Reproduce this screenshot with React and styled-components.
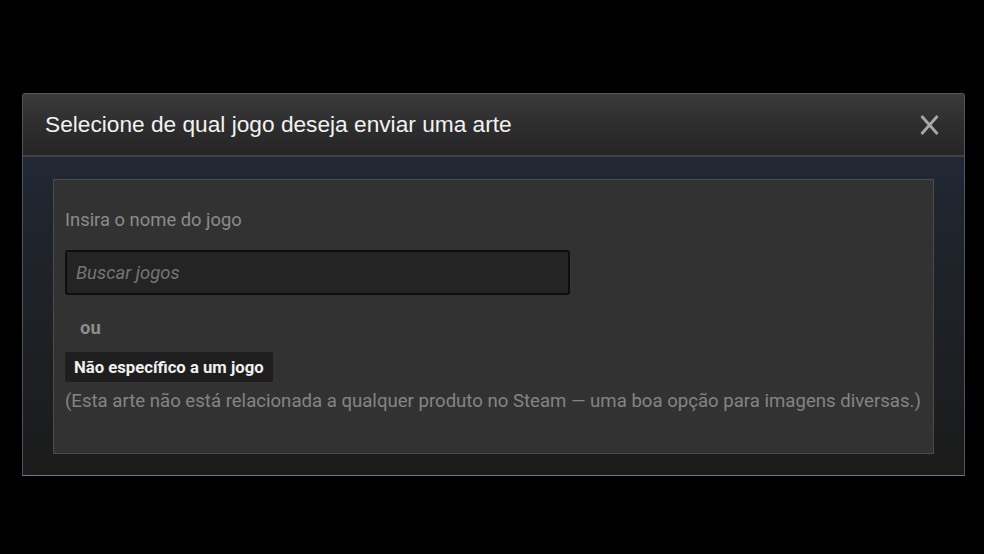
import styled, { createGlobalStyle } from "styled-components";

const GlobalStyle = createGlobalStyle`
  html, body {
    margin: 0;
    padding: 0;
    background: #000;
  }
  body {
    width: 984px;
    height: 554px;
    overflow: hidden;
  }
`;

const Screen = styled.div`
  width: 984px;
  height: 554px;
  padding: 93px 19px 0 22px;
  box-sizing: border-box;
  background: #000;
`;

const Modal = styled.div`
  width: 943px;
  box-sizing: border-box;
  border: 1px solid #4d5560;
  border-top-color: #55575a;
  border-bottom-color: #667a8c;
  border-radius: 3px 3px 0 0;
  box-shadow: 0 0 12px rgba(0, 0, 0, 0.8);
`;

const Header = styled.div`
  height: 61px;
  display: flex;
  align-items: center;
  justify-content: space-between;
  padding: 0 25px 0 22px;
  background: linear-gradient(to bottom, #3a3a3a 0%, #2e2e2e 50%, #252525 100%);
  border-bottom: 2px solid #3f4144;
`;

const Title = styled.h1`
  margin: 0;
  font-family: "Liberation Sans", Arial, sans-serif;
  font-weight: 400;
  font-size: 22.7px;
  color: #f2f2f2;
`;

const Close = styled.button`
  background: none;
  border: none;
  padding: 0;
  width: 19px;
  height: 20px;
  display: flex;
  cursor: pointer;
`;

const Body = styled.div`
  padding: 22px 30px 21px 30px;
  background: linear-gradient(to bottom, #212835 0%, #1f232a 30%, #1b1b1b 100%);
`;

const Panel = styled.div`
  height: 275px;
  box-sizing: border-box;
  border: 1px solid #4b4b4b;
  background: #323232;
  padding: 27px 11px 0 11px;
  font-family: Roboto, "Liberation Sans", sans-serif;
  font-size: 18.4px;
  color: #8b8b8b;
`;

const Label = styled.div`
  line-height: 26px;
  margin-bottom: 17px;
`;

const SearchInput = styled.input`
  display: block;
  width: 505px;
  height: 45px;
  box-sizing: border-box;
  border: 2px solid #0e0e0e;
  border-radius: 3px;
  background: #242424;
  padding: 0 9px;
  font-family: Roboto, "Liberation Sans", sans-serif;
  font-size: 18.4px;
  font-style: italic;
  color: #ccc;
  outline: none;

  &::placeholder {
    color: #757575;
  }
`;

const Or = styled.div`
  margin: 20px 0 0 15px;
  line-height: 26px;
  font-weight: 700;
  color: #8d8d8d;
`;

const PlainButton = styled.button`
  margin-top: 11px;
  height: 30px;
  padding: 0 9px;
  border: none;
  border-radius: 2px;
  background: #1e1e1e;
  font-family: Roboto, "Liberation Sans", sans-serif;
  font-size: 16.7px;
  font-weight: 700;
  color: #f0f0f0;
  cursor: pointer;
`;

const Note = styled.div`
  margin-top: 6px;
  line-height: 26px;
  font-size: 18.6px;
  color: #848484;
`;

export default function App() {
  return (
    <>
      <GlobalStyle />
      <Screen>
        <Modal>
          <Header>
            <Title>Selecione de qual jogo deseja enviar uma arte</Title>
            <Close aria-label="Fechar">
              <svg width="19" height="20" viewBox="0 0 19 20">
                <path
                  d="M1.5 1 L17.5 19 M17.5 1 L1.5 19"
                  stroke="#a9a9a9"
                  strokeWidth="2.8"
                  fill="none"
                />
              </svg>
            </Close>
          </Header>
          <Body>
            <Panel>
              <Label>Insira o nome do jogo</Label>
              <SearchInput placeholder="Buscar jogos" />
              <Or>ou</Or>
              <PlainButton>Não específico a um jogo</PlainButton>
              <Note>
                (Esta arte não está relacionada a qualquer produto no Steam — uma
                boa opção para imagens diversas.)
              </Note>
            </Panel>
          </Body>
        </Modal>
      </Screen>
    </>
  );
}
